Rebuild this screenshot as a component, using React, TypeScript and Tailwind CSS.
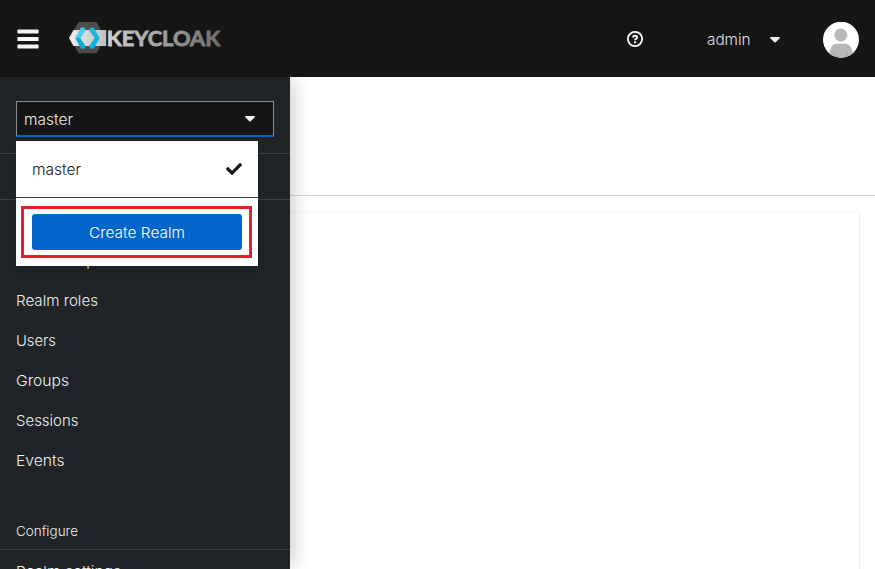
import React from "react";
import { FaCheck } from "react-icons/fa";

const manageItems: { label: string; width: number }[] = [
  { label: "Client scopes", width: 96 },
  { label: "Realm roles", width: 82 },
  { label: "Users", width: 40 },
  { label: "Groups", width: 53 },
  { label: "Sessions", width: 62.5 },
  { label: "Events", width: 48.5 },
];

function Label({ text, width, size = 14.8 }: { text: string; width: number; size?: number }) {
  return (
    <svg width={width} height="24" className="block shrink-0 overflow-visible font-['Inter',sans-serif]">
      <text x="0" y="18" fontSize={size} fontWeight="300" textLength={width} lengthAdjust="spacingAndGlyphs" fill="currentColor">
        {text}
      </text>
    </svg>
  );
}

function Caret() {
  return (
    <svg width="10" height="6" viewBox="0 0 10 6" fill="currentColor" className="block">
      <path d="M0.8 0H9.2C9.9 0 10.2 0.7 9.7 1.2L5.7 5.3C5.3 5.7 4.7 5.7 4.3 5.3L0.3 1.2C-0.2 0.7 0.1 0 0.8 0Z" />
    </svg>
  );
}

function Logo() {
  return (
    <svg width="154" height="34" viewBox="68 21 154 34" className="block overflow-visible">
      <defs>
        <linearGradient id="word" x1="105" x2="222" y1="0" y2="0" gradientUnits="userSpaceOnUse">
          <stop offset="0" stopColor="#d2d2d2" />
          <stop offset="1" stopColor="#6c6c6c" />
        </linearGradient>
        <linearGradient id="band" x1="69" x2="106" y1="0" y2="0" gradientUnits="userSpaceOnUse">
          <stop offset="0" stopColor="#ededed" />
          <stop offset="1" stopColor="#c0c0c0" />
        </linearGradient>
      </defs>
      <path d="M78.5 22H96.5L105 37.5L96.5 53.3H78.5L70 37.5Z" fill="#4d4d4d" />
      <path d="M73.5 30H106.2V46H73.5L69 38Z" fill="url(#band)" />
      <path d="M81 27.5H84.2L85.7 30.2L80.6 38H75.2Z" fill="#4acbea" />
      <path d="M75.2 38H80.2L85.7 46L84.2 48.7H81Z" fill="#16a9d0" />
      <path d="M90.6 27.5H93.6L99.7 38H94.6L89.1 30.2Z" fill="#20b6dc" />
      <path d="M94.6 38H99.7L93.6 48.7H90.6L89.1 46Z" fill="#08b5df" />
      <text x="106.8" y="45.5" fontSize="21.2" fontWeight="700" textLength="113.5" lengthAdjust="spacingAndGlyphs" fill="url(#word)" stroke="url(#word)" strokeWidth="0.8" className="font-['Lato',sans-serif]">
        KEYCLOAK
      </text>
    </svg>
  );
}

function Avatar() {
  return (
    <svg width="36" height="36" viewBox="0 0 36 36" className="block">
      <defs>
        <clipPath id="face"><circle cx="18" cy="17.7" r="18" /></clipPath>
      </defs>
      <circle cx="18" cy="17.7" r="18" fill="#fff" />
      <g clipPath="url(#face)">
        <circle cx="17.8" cy="13" r="6.5" fill="#b8b8b8" />
        <path d="M6.5 36V31C7 25 10 21.7 14 21.7H22C26.5 21.7 29 25.5 29.5 31V36Z" fill="#b8b8b8" />
        <path d="M11.3 30L13.3 36H11Z M24.7 30L22.8 36H25.3Z" fill="#a2a2a2" />
      </g>
    </svg>
  );
}

export default function App() {
  return (
    <div className="flex h-[569px] w-[875px] flex-col overflow-hidden bg-white font-['Inter',sans-serif]">
      <header className="z-20 flex h-[77px] shrink-0 bg-[#151515] text-[#f0f0f0]">
        <div className="flex w-[68px] pl-[17px] pt-7">
          <svg width="22" height="22" viewBox="0 0 22 22" fill="#f5f5f5">
            <rect x="0.4" y="1.5" width="21.2" height="4" rx="0.7" />
            <rect x="0.4" y="9" width="21.2" height="4" rx="0.7" />
            <rect x="0.4" y="16.4" width="21.2" height="4" rx="0.7" />
          </svg>
        </div>
        <div className="pt-[21px]"><Logo /></div>
        <div className="ml-auto flex pr-4">
          <svg width="16" height="16" viewBox="0 0 16 16" fill="none" stroke="#fff" className="mt-[31px]">
            <circle cx="8" cy="8" r="7.1" strokeWidth="1.8" />
            <path d="M5.7 6.4C6 5.2 6.8 4.7 8 4.7C9.3 4.7 10.2 5.4 10.2 6.4C10.2 7.7 8.1 7.6 8.1 9.2" strokeWidth="1.9" />
            <rect x="7.1" y="10.3" width="1.9" height="1.9" fill="#fff" stroke="none" />
          </svg>
          <div className="ml-16 mt-[27px] text-[#e0e0e0]"><Label text="admin" width={43.5} /></div>
          <div className="ml-[19.5px] mt-[37px]"><Caret /></div>
          <div className="ml-[43px] mt-[21.5px]"><Avatar /></div>
        </div>
      </header>

      <div className="flex min-h-0 flex-1">
        <aside className="z-10 w-[290px] shrink-0 bg-[#212427] text-[#f0f0f0] shadow-[8px_0_16px_-3px_rgba(3,3,3,0.18)]">
          <div className="relative h-[77px] border-b border-[#3c3f42] px-4 pt-6">
            <button className="flex h-9 w-[258px] items-center justify-between border border-b-2 border-[#8a8d90] border-b-[#0066cc] bg-[#151515] pl-[7px] pr-[18px]">
              <Label text="master" width={49} />
              <Caret />
            </button>
            <div className="absolute left-4 top-16 z-10 h-[125px] w-[242px] bg-white text-[#151515] shadow-[0_4px_8px_rgba(3,3,3,0.12)]">
              <div className="flex h-[57px] items-center justify-between border-b border-[#3c3f42] px-4">
                <Label text="master" width={49} />
                <FaCheck size={16} />
              </div>
              <div className="ml-[5px] mt-2 flex h-[52px] w-[231px] items-center border-3 border-[#ee1c25] pl-2">
                <button className="flex h-9 w-[210px] shrink-0 items-center justify-center rounded-[3px] bg-[#0066cc] text-white">
                  <Label text="Create Realm" width={96} />
                </button>
              </div>
            </div>
          </div>
          <div className="h-[46px] border-b border-[#3c3f42]" />
          <nav className="pt-10">
            {manageItems.map((item) => (
              <a key={item.label} className="flex h-10 items-center px-4">
                <Label text={item.label} width={item.width} />
              </a>
            ))}
          </nav>
          <div className="mt-8 flex h-[38px] items-center border-b border-[#3c3f42] px-4 pb-0.5">
            <Label text="Configure" width={62} size={13} />
          </div>
          <a className="flex h-10 items-center px-4 pt-0.5"><Label text="Realm settings" width={105} /></a>
        </aside>
        <main className="flex flex-1 flex-col">
          <div className="h-[119px] shrink-0 border-b border-[#d2d2d2]" />
          <div className="mr-[15px] mt-[15px] flex-1 border-r border-t border-[#f0f0f0] border-t-[#f5f5f5]" />
        </main>
      </div>
    </div>
  );
}
